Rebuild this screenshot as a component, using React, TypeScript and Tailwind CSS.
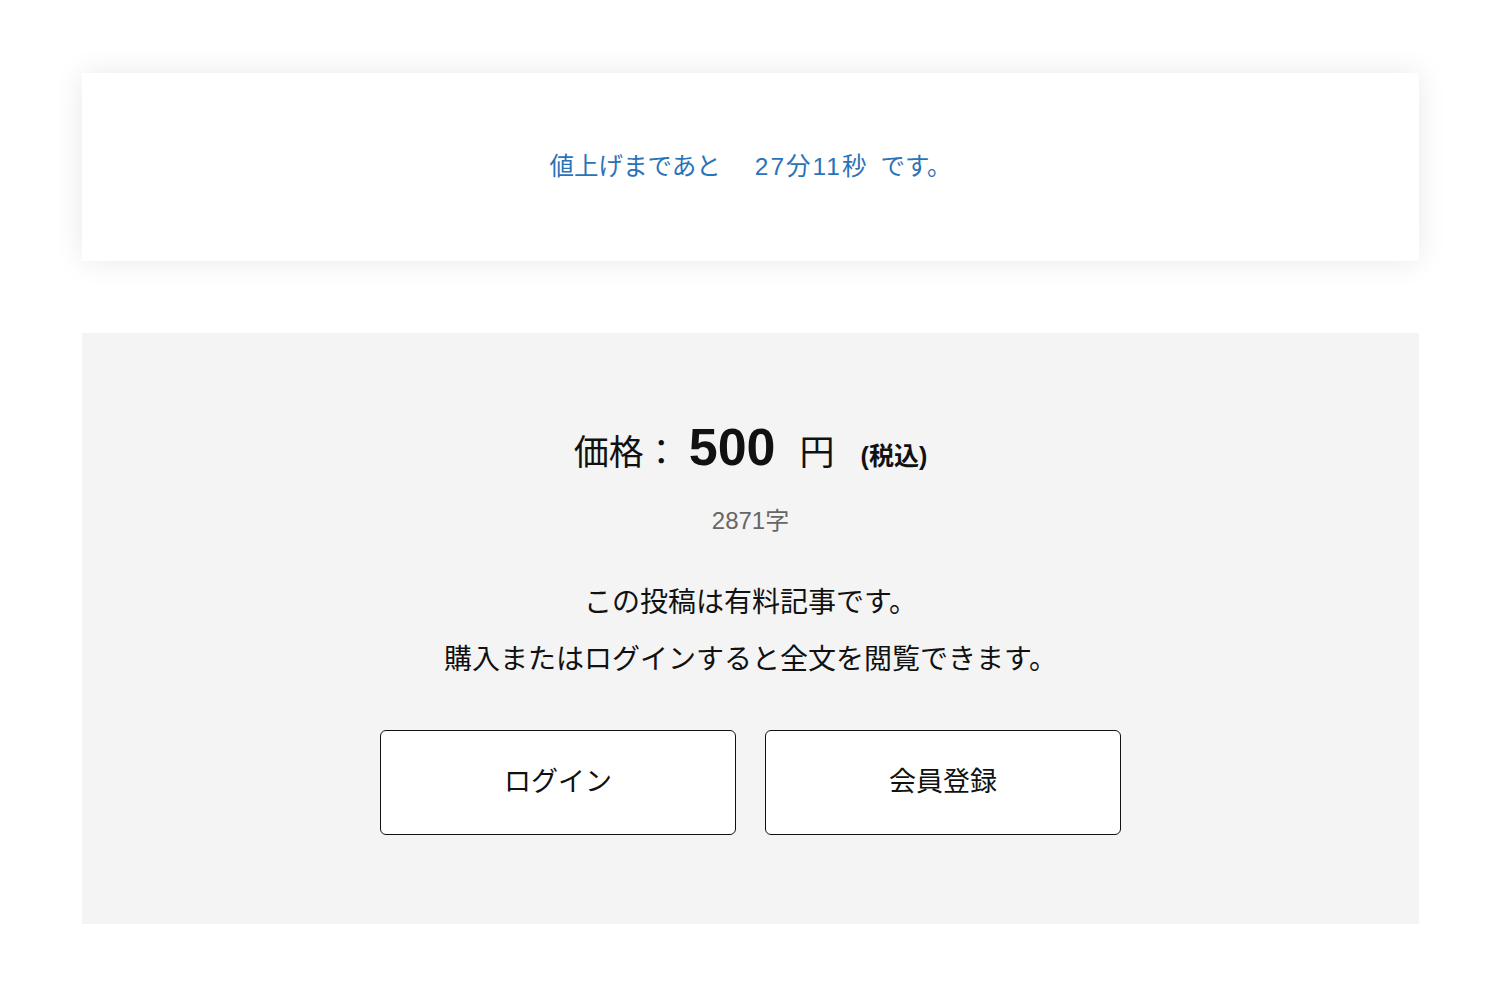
const jp = "font-['Liberation_Sans','Noto_Sans_CJK_JP',sans-serif]"

export default function App() {
  return (
    <div className={`min-h-[1001px] w-[1500px] bg-white pt-[73px] ${jp}`}>
      <div className="ml-[82px] w-[1337px] h-[188px] bg-white shadow-[0_0_28px_rgba(0,0,0,0.09)] flex items-center justify-center">
        <p className="text-[24.5px] text-[#2b73b7] flex items-baseline">
          <span>値上げまであと</span>
          <span className="ml-[34px] tracking-[2px]">27分11秒</span>
          <span className="ml-[12px]">です。</span>
        </p>
      </div>

      <div className="ml-[82px] mt-[72px] w-[1337px] h-[591px] bg-[#f4f4f4] flex flex-col items-center pt-[88px]">
        <div className="flex items-baseline h-[60px] text-[#111]">
          <span className="text-[35px]">価格：</span>
          <span className="text-[52px] font-bold ml-[10px] leading-none">500</span>
          <span className="text-[35px] ml-[24px]">円</span>
          <span className="text-[25px] font-bold ml-[26px]">(税込)</span>
        </div>
        <p className="mt-[24px] text-[24px] leading-[32px] text-[#666]">2871字</p>
        <p className="mt-[46px] text-[28px] leading-[40px] text-[#111]">この投稿は有料記事です。</p>
        <p className="mt-[17px] text-[28px] leading-[40px] text-[#111]">購入またはログインすると全文を閲覧できます。</p>
        <div className="mt-[50px] flex gap-[29px]">
          <button className="w-[356px] h-[105px] bg-white border-[1.5px] border-[#111] rounded-[6px] text-[27px] text-[#111]">
            ログイン
          </button>
          <button className="w-[356px] h-[105px] bg-white border-[1.5px] border-[#111] rounded-[6px] text-[27px] text-[#111]">
            会員登録
          </button>
        </div>
      </div>
    </div>
  )
}
